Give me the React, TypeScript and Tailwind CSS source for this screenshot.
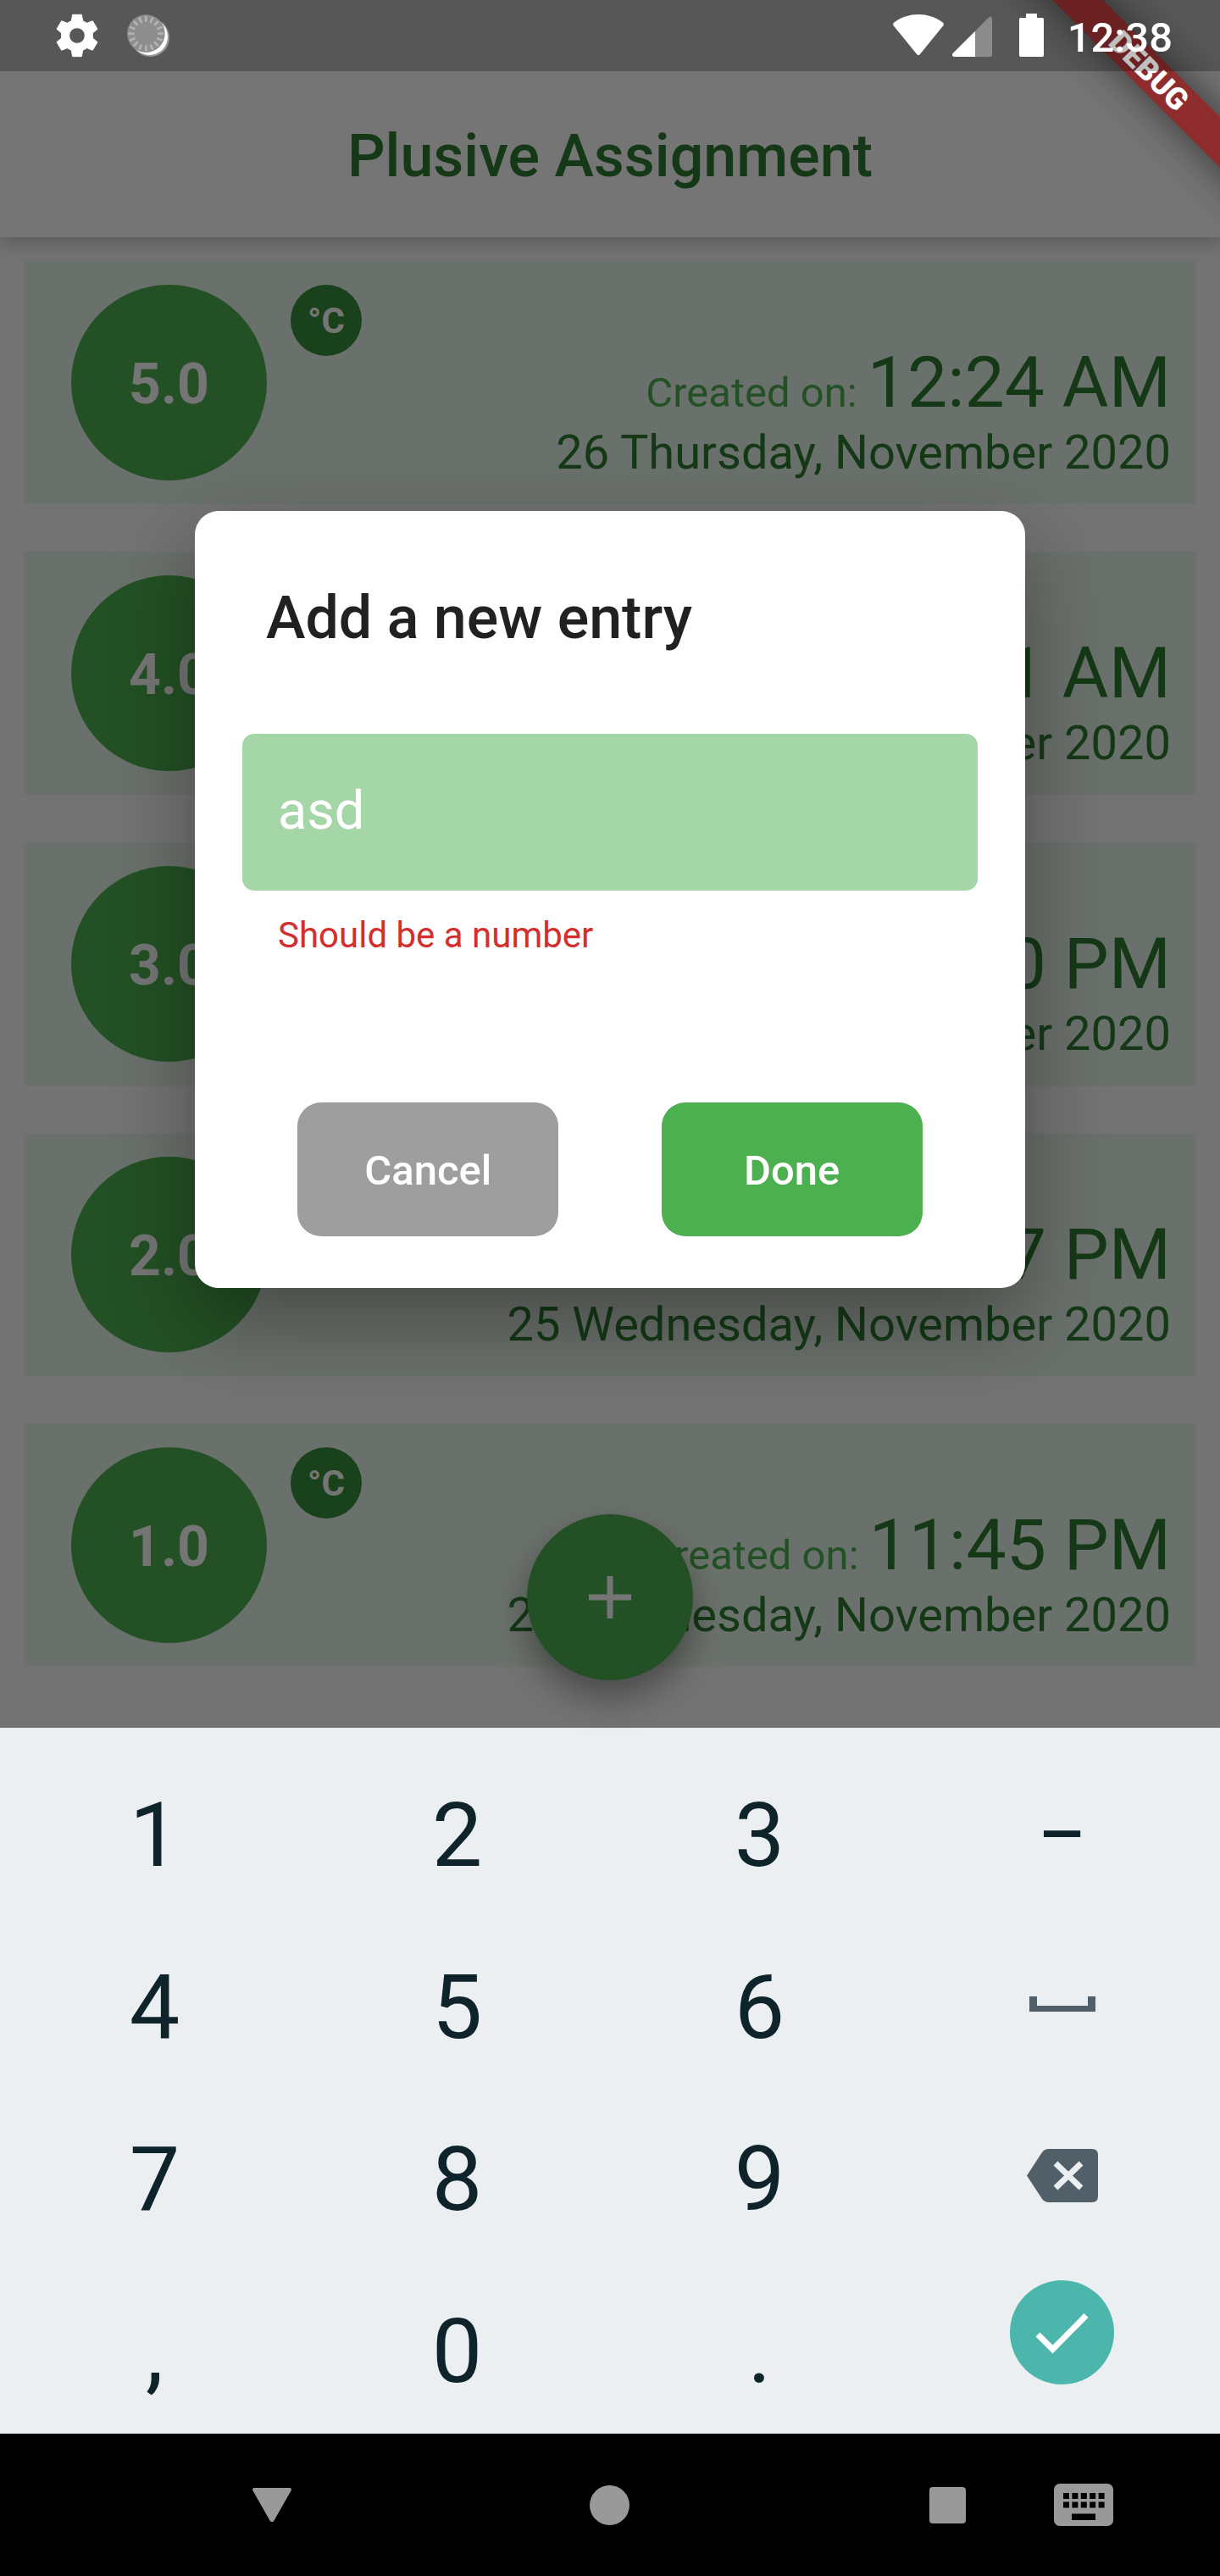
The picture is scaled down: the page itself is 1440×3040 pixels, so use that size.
import { useState, type ReactNode } from "react";

type Entry = { value: string; time: string; date: string };

const entries: Entry[] = [
  { value: "5.0", time: "12:24 AM", date: "26 Thursday, November 2020" },
  { value: "4.0", time: "12:21 AM", date: "26 Thursday, November 2020" },
  { value: "3.0", time: "11:50 PM", date: "25 Wednesday, November 2020" },
  { value: "2.0", time: "11:47 PM", date: "25 Wednesday, November 2020" },
  { value: "1.0", time: "11:45 PM", date: "25 Wednesday, November 2020" },
];

function GearIcon() {
  return (
    <svg viewBox="198 0 150 252" className="h-[84px] w-[50px]" fill="#fff" aria-hidden="true">
      <path
        fillRule="evenodd"
        stroke="#fff"
        strokeWidth="3"
        strokeLinejoin="round"
        d="M257 52H289L293 74L308 82L328 74L345 103L328 117V135L345 149L328 178L308 170L293 178L289 200H257L253 178L238 170L218 178L201 149L218 135V117L201 103L218 74L238 82L253 74ZM273 98a28 28 0 1 0 0 56a28 28 0 1 0 0-56Z"
      />
    </svg>
  );
}

function SyncIcon() {
  const ticks = Array.from({ length: 16 }, (_, i) => i * 22.5);
  return (
    <svg viewBox="450 0 150 252" className="h-[84px] w-[50px]" aria-hidden="true">
      <circle cx="532" cy="133" r="68" fill="#999" />
      <circle cx="529" cy="130" r="65" fill="#fff" />
      <circle cx="517" cy="119" r="67" fill="#8e8e8e" />
      {ticks.map((a) => (
        <path
          key={a}
          d="M517 60V74"
          stroke="#b3b3b3"
          strokeWidth="8"
          strokeLinecap="round"
          transform={`rotate(${a} 517 119)`}
        />
      ))}
    </svg>
  );
}

function StatusBar() {
  return (
    <div className="z-40 col-start-1 row-start-1 flex h-[84px] items-center bg-black/25 pl-[66px] pr-[56px] text-white">
      <GearIcon />
      <span className="w-[34px]" />
      <SyncIcon />
      <span className="flex-1" />
      <svg viewBox="282 0 180 252" className="h-[84px] w-[60px]" fill="#fff" aria-hidden="true">
        <path d="M285 80C310 61 340 51 372 51S434 61 459 80Q464 85 460 91L377 193Q372 199 367 193L284 91Q280 85 285 80Z" />
      </svg>
      <svg viewBox="492 0 141 252" className="ml-[10px] h-[84px] w-[47px]" aria-hidden="true">
        <path d="M573 110L620 62Q633 54 633 67V195Q633 201 627 201H573Z" fill="#8b8b8b" />
        <path d="M573 110V201H498Q489 198 493 190Z" fill="#fff" />
      </svg>
      <svg viewBox="729 0 87 252" className="ml-[32px] h-[84px] w-[29px]" fill="#fff" aria-hidden="true">
        <path d="M753 48H792V63H811Q816 63 816 68V196Q816 201 811 201H734Q729 201 729 196V68Q729 63 734 63H753Z" />
      </svg>
      <time className="ml-[28px] pt-1 text-[49px] leading-none font-medium">12:38</time>
    </div>
  );
}

function DebugBanner() {
  return (
    <div className="pointer-events-none z-30 col-start-1 row-start-1 flex items-start justify-end">
      <div className="relative size-[300px] overflow-hidden">
        <div className="absolute top-[63px] right-[-166px] flex h-[42px] w-[500px] rotate-45 items-center justify-center bg-[#8f2d2e] text-[36px] leading-none font-black text-white shadow-[0_0_50px_rgba(0,0,0,0.55)]">
          DEBUG
        </div>
      </div>
    </div>
  );
}

function EntryCard({ value, time, date }: Entry) {
  return (
    <li className="flex items-start gap-7 bg-[#e8f5e9] py-7 pr-[30px] pl-14">
      <span className="flex size-[231px] shrink-0 items-center justify-center rounded-full bg-[#4caf50] pt-1 text-[66px] font-bold text-white">
        {value}
      </span>
      <span className="flex size-[84px] shrink-0 items-center justify-center rounded-full bg-[#388e3c] text-[42px] font-bold text-white">
        °C
      </span>
      <div className="flex flex-1 flex-col items-end self-end whitespace-nowrap text-[#2e7d32]">
        <p className="text-[84px] leading-[98px]">
          <span className="text-[49px] leading-none text-[#4caf50]">Created on: </span>
          {time}
        </p>
        <p className="text-[56px] leading-[66px]">{date}</p>
      </div>
    </li>
  );
}

function EntryDialog() {
  const [value, setValue] = useState("asd");
  const invalid = value.trim() === "" || Number.isNaN(Number(value));
  return (
    <div className="z-20 col-start-1 row-start-1 flex items-center justify-center bg-black/54 px-10 pt-[84px]">
      <form
        role="dialog"
        aria-labelledby="dialog-title"
        onSubmit={(e) => e.preventDefault()}
        className="w-full max-w-[980px] rounded-[28px] bg-white pt-[84px] pb-[61px] shadow-[0_40px_100px_rgba(0,0,0,0.33)]"
      >
        <h2 id="dialog-title" className="px-[84px] text-[70px] leading-[84px] font-medium text-[#212121]">
          Add a new entry
        </h2>
        <div className="mt-[95px] px-14">
          <input
            type="text"
            aria-label="Temperature"
            aria-invalid={invalid}
            aria-describedby="value-error"
            value={value}
            onChange={(e) => setValue(e.target.value)}
            className="block h-[185px] w-full rounded-[14px] bg-[#a5d6a7] px-[42px] pb-1 text-[63px] text-white outline-none"
          />
          <p id="value-error" className="mt-7 h-[50px] px-[42px] text-[42px] leading-[50px] text-[#d32f2f]">
            {invalid ? "Should be a number" : ""}
          </p>
        </div>
        <div className="mt-[172px] flex justify-evenly text-[49px] font-medium text-white">
          <button type="button" className="h-[158px] w-[308px] rounded-[28px] bg-[#9e9e9e] pt-1">
            Cancel
          </button>
          <button type="submit" className="h-[158px] w-[308px] rounded-[28px] bg-[#4caf50] pt-1">
            Done
          </button>
        </div>
      </form>
    </div>
  );
}

function Key({ label, children }: { label: string; children?: ReactNode }) {
  return (
    <button type="button" aria-label={label} className="flex items-center justify-center">
      {children ?? <span className="pt-2">{label}</span>}
    </button>
  );
}

function Keyboard() {
  return (
    <div className="grid auto-rows-[203px] grid-cols-4 bg-[#ebeff2] pt-[21px] pr-2 pl-1 text-[106px] leading-none text-[#0f232b]">
      <Key label="1" />
      <Key label="2" />
      <Key label="3" />
      <Key label="−" />
      <Key label="4" />
      <Key label="5" />
      <Key label="6" />
      <Key label="space">
        <svg viewBox="0 0 78 18" className="h-[18px] w-[78px]" fill="#505f68">
          <path d="M0 0H9V11H69V0H78V18H0Z" />
        </svg>
      </Key>
      <Key label="7" />
      <Key label="8" />
      <Key label="9" />
      <Key label="delete">
        <svg viewBox="0 0 84 63" className="h-[63px] w-[84px]" aria-hidden="true">
          <path d="M0 31.500L18 4Q21 0 26 0H77Q84 0 84 7V56Q84 63 77 63H26Q21 63 18 59Z" fill="#505f68" />
          <path d="M34 17L64 46M64 17L34 46" stroke="#ebeff2" strokeWidth="7" />
        </svg>
      </Key>
      <Key label="," />
      <Key label="0" />
      <Key label="." />
      <button type="button" aria-label="done" className="flex items-start justify-center pt-[22px]">
        <svg viewBox="0 0 123 123" className="size-[123px]" aria-hidden="true">
          <circle cx="61.500" cy="61.500" r="61.500" fill="#4db6ac" />
          <path d="M33 64L50.500 81.500L90 41.500" fill="none" stroke="#fff" strokeWidth="7" />
        </svg>
      </button>
    </div>
  );
}

function NavBar() {
  return (
    <nav className="flex h-[168px] items-center bg-black pr-[126px] pl-[297px]">
      <div className="flex flex-1 items-center justify-between">
        <button type="button" aria-label="Hide keyboard">
          <svg viewBox="0 0 48 48" className="size-12" fill="#999" stroke="#999" strokeWidth="4" strokeLinejoin="round">
            <path d="M3 6H45L24.500 42H23.500Z" />
          </svg>
        </button>
        <button type="button" aria-label="Home" className="size-[47px] rounded-full bg-[#999]" />
        <button type="button" aria-label="Recent apps" className="flex size-12 items-center justify-center">
          <span className="size-[43px] rounded-[4px] bg-[#999]" />
        </button>
      </div>
      <button type="button" aria-label="Switch keyboard" className="ml-[102px]">
        <svg viewBox="0 0 70 50" className="h-[50px] w-[70px]">
          <rect width="70" height="50" rx="7" fill="#999" />
          {[0, 1, 2, 3, 4].map((c) => (
            <g key={c}>
              <rect x={11 + c * 10.4} y="11" width="7" height="7" />
              <rect x={11 + c * 10.4} y="21.500" width="7" height="7" />
            </g>
          ))}
          <rect x="21" y="35.500" width="28" height="7.500" />
        </svg>
      </button>
    </nav>
  );
}

export default function App() {
  return (
    <div className="flex min-h-screen flex-col font-['Roboto',sans-serif]">
      <main className="grid flex-1 grid-cols-1">
        <div className="relative col-start-1 row-start-1 flex flex-col bg-[#fafafa]">
          <header className="z-10 bg-white pt-[84px] shadow-[0_5px_20px_rgba(0,0,0,0.25)]">
            <h1 className="pt-1 text-center text-[70px] leading-[192px] font-medium text-[#2e7d32]">Plusive Assignment</h1>
          </header>
          <ul className="flex flex-col gap-14 p-7 pb-[72px]">
            {entries.map((e) => (
              <EntryCard key={e.value} {...e} />
            ))}
          </ul>
          <button
            type="button"
            aria-label="Add entry"
            className="absolute bottom-14 left-1/2 flex size-[196px] -translate-x-1/2 items-center justify-center rounded-full bg-[#4caf50] shadow-[0_20px_40px_rgba(0,0,0,0.36)]"
          >
            <svg viewBox="0 0 50 50" className="size-[50px]" stroke="#fff" strokeWidth="7">
              <path d="M25 0V50M0 25H50" />
            </svg>
          </button>
        </div>
        <EntryDialog />
        <DebugBanner />
        <StatusBar />
      </main>
      <Keyboard />
      <NavBar />
    </div>
  );
}
